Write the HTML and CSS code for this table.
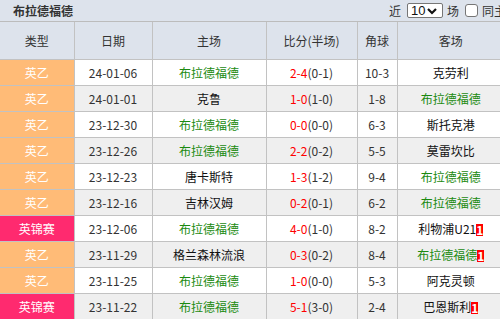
FILE: index.html
```html
<!DOCTYPE html>
<html lang="zh">
<head>
<meta charset="utf-8">
<link rel="stylesheet" href="styles.css">
</head>
<body>
<div class="page">
  <div class="topbar">
    <span class="title">布拉德福德</span>
    <div class="filter">
      <span>近</span>
      <span class="select">10<svg width="10" height="8" viewBox="0 0 10 8"><path d="M1 2 L5 6 L9 2" fill="none" stroke="#111" stroke-width="2.2"/></svg></span>
      <span>场</span>
      <span class="check"></span>
      <span>同主客</span>
    </div>
  </div>
  <table class="matches">
    <colgroup>
      <col class="c1"><col class="c2"><col class="c3"><col class="c4"><col class="c5"><col class="c6">
    </colgroup>
    <thead>
      <tr><th>类型</th><th>日期</th><th>主场</th><th>比分(半场)</th><th>角球</th><th>客场</th></tr>
    </thead>
    <tbody>
      <tr><td class="lg l1">英乙</td><td>24-01-06</td><td class="g">布拉德福德</td><td><span class="r">2-4</span>(0-1)</td><td>10-3</td><td class="k">克劳利</td></tr>
      <tr class="alt"><td class="lg l1">英乙</td><td>24-01-01</td><td class="k">克鲁</td><td><span class="r">1-0</span>(1-0)</td><td>1-8</td><td class="g">布拉德福德</td></tr>
      <tr><td class="lg l1">英乙</td><td>23-12-30</td><td class="g">布拉德福德</td><td><span class="r">0-0</span>(0-0)</td><td>6-3</td><td class="k">斯托克港</td></tr>
      <tr class="alt"><td class="lg l1">英乙</td><td>23-12-26</td><td class="g">布拉德福德</td><td><span class="r">2-2</span>(0-2)</td><td>5-5</td><td class="k">莫雷坎比</td></tr>
      <tr><td class="lg l1">英乙</td><td>23-12-23</td><td class="k">唐卡斯特</td><td><span class="r">1-3</span>(1-2)</td><td>9-4</td><td class="g">布拉德福德</td></tr>
      <tr class="alt"><td class="lg l1">英乙</td><td>23-12-16</td><td class="k">吉林汉姆</td><td><span class="r">0-2</span>(0-1)</td><td>6-2</td><td class="g">布拉德福德</td></tr>
      <tr><td class="lg l2">英锦赛</td><td>23-12-06</td><td class="g">布拉德福德</td><td><span class="r">4-0</span>(1-0)</td><td>8-2</td><td class="k">利物浦U21<span class="badge">1</span></td></tr>
      <tr class="alt"><td class="lg l1">英乙</td><td>23-11-29</td><td class="k">格兰森林流浪</td><td><span class="r">0-3</span>(0-2)</td><td>8-4</td><td class="g">布拉德福德<span class="badge">1</span></td></tr>
      <tr><td class="lg l1">英乙</td><td>23-11-25</td><td class="g">布拉德福德</td><td><span class="r">1-0</span>(0-0)</td><td>5-3</td><td class="k">阿克灵顿</td></tr>
      <tr class="alt"><td class="lg l2">英锦赛</td><td>23-11-22</td><td class="g">布拉德福德</td><td><span class="r">5-1</span>(3-0)</td><td>2-4</td><td class="k">巴恩斯利<span class="badge">1</span></td></tr>
    </tbody>
  </table>
</div>
</body>
</html>
```

FILE: styles.css
```css
html, body {
  margin: 0;
  padding: 0;
  background: #ffffff;
  overflow: hidden;
}
body {
  width: 500px;
  height: 319px;
  font-family: "Noto Sans CJK SC", "Noto Sans", sans-serif;
  font-size: 12px;
  color: #333;
}
.page {
  width: 504px;
}
.topbar {
  height: 21px;
  background: #dde3ec;
  border-bottom: 1px solid #bcbcbc;
  display: flex;
  align-items: center;
  box-sizing: content-box;
}
.title {
  font-weight: bold;
  padding-left: 13px;
  color: #333;
}
.filter {
  margin-left: auto;
  margin-right: -14px;
  display: flex;
  align-items: center;
  gap: 4px;
  white-space: nowrap;
  color: #333;
}
.select {
  display: inline-flex;
  align-items: center;
  gap: 2px;
  width: 36px;
  height: 15px;
  box-sizing: border-box;
  border: 1px solid #767676;
  border-radius: 2px;
  background: #fff;
  padding-left: 3px;
  color: #111;
  font-family: "Liberation Sans", sans-serif;
  font-size: 13px;
  margin-left: 2px;
}
.check {
  width: 13px;
  height: 13px;
  box-sizing: border-box;
  border: 1px solid #767676;
  border-radius: 3px;
  background: #fff;
  margin-left: 2px;
}
.matches {
  width: 504px;
  border-collapse: collapse;
  table-layout: fixed;
}
.c1 { width: 74px; }
.c2 { width: 78px; }
.c3 { width: 114px; }
.c4 { width: 91px; }
.c5 { width: 40px; }
.c6 { width: 107px; }
.matches th,
.matches td {
  border: 1px solid #c2c2c2;
  text-align: center;
  padding: 0;
  white-space: nowrap;
}
.matches tr > :first-child { border-left: none; }
.matches tr > :last-child { border-right: none; }
.matches thead tr > th { border-top: none; }
.matches th {
  height: 37px;
  background: #dde3ec;
  font-weight: normal;
  color: #333;
}
.matches td {
  height: 25px;
  background: #fff;
}
.matches tr.alt td {
  background: #efefef;
}
.matches td.lg { color: #fff; }
.matches td.l1, .matches tr.alt td.l1 { background: #ffbb77; }
.matches td.l2, .matches tr.alt td.l2 { background: #ff2a6f; }
.g { color: #1a8a10; }
.k { color: #111; }
.r { color: #ff0000; }
.badge {
  display: inline-block;
  background: #ff0000;
  color: #fff;
  font-weight: bold;
  line-height: 12px;
  width: 7px;
  font-size: 12px;
  vertical-align: -1px;
}
```
